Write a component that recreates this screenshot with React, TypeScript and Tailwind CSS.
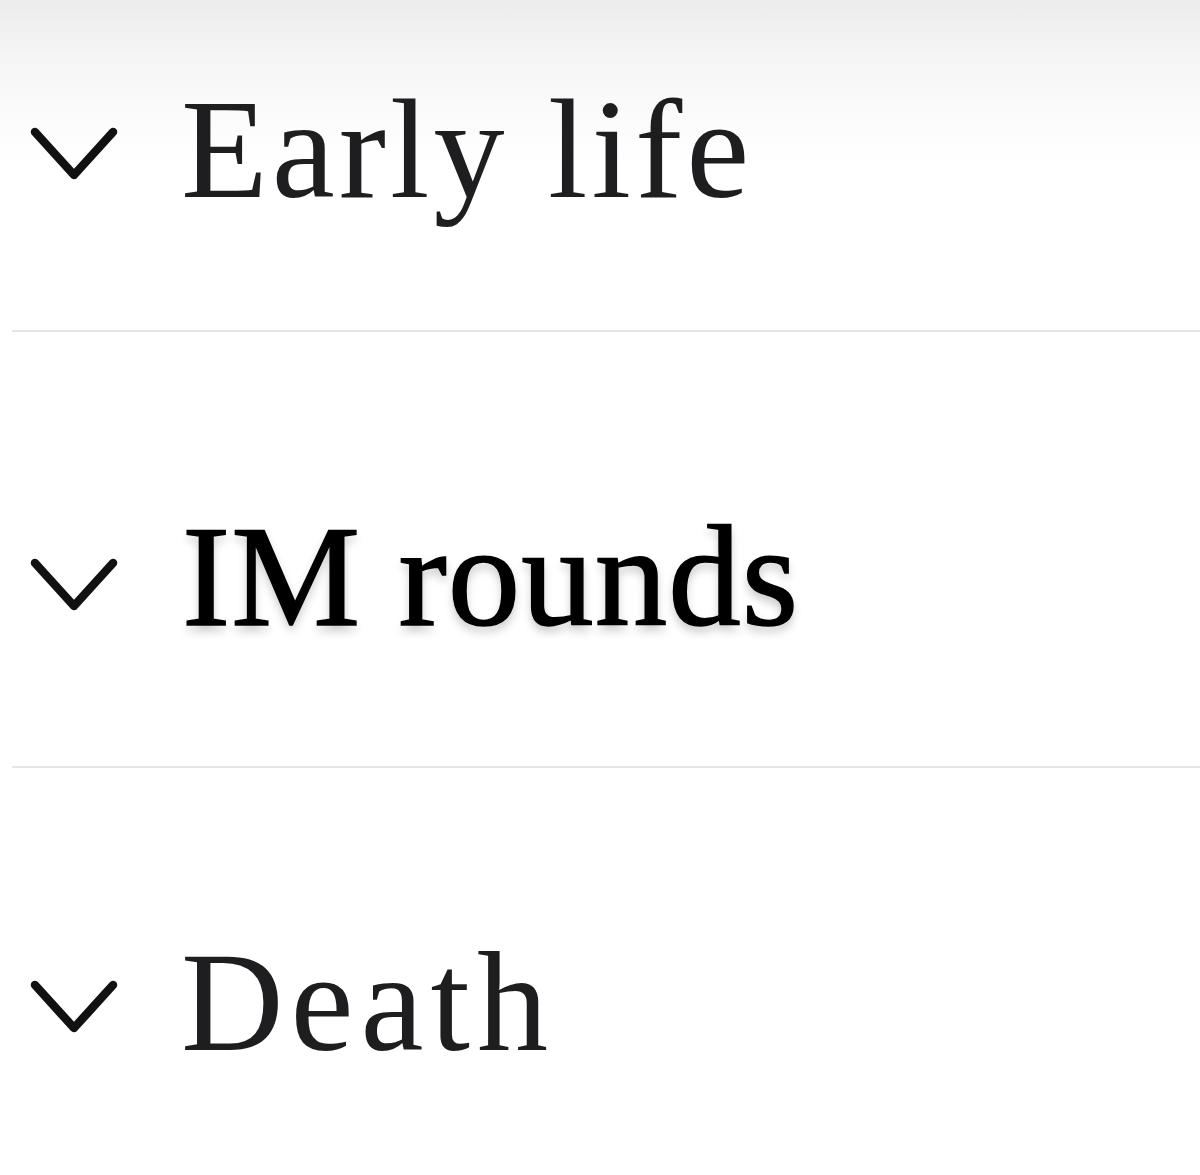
import React from 'react';

const serif = { fontFamily: '"Liberation Serif", "Times New Roman", serif' };

const Chevron: React.FC = () => (
  <svg width={92} height={64} viewBox="0 0 92 64" className="shrink-0">
    <path d="M7 14 L46 57 L85 14" fill="none" stroke="#111" strokeWidth={8.5} strokeLinecap="round" strokeLinejoin="round" />
  </svg>
);

const Section: React.FC<{ title: string; strong?: boolean; chevronOffset?: string; tracking?: string }> = ({
  title,
  strong,
  chevronOffset = 'mt-[4px]',
  tracking = 'tracking-[4px]',
}) => (
  <div className="flex items-center">
    <div className={`ml-[28px] ${chevronOffset}`}>
      <Chevron />
    </div>
    {strong ? (
      <h2
        style={serif}
        className="ml-[62px] text-[145px] leading-none tracking-[1px] text-black [-webkit-text-stroke:1.5px_black] [text-shadow:0_6px_10px_rgba(0,0,0,0.22)]"
      >
        {title}
      </h2>
    ) : (
      <h2 style={serif} className={`ml-[61px] text-[142px] leading-none ${tracking} text-[#1e1e20]`}>
        {title}
      </h2>
    )}
  </div>
);

export default function App() {
  return (
    <div className="w-[1200px] h-[1175px] overflow-hidden bg-[linear-gradient(to_bottom,#ececec_0%,#f7f7f7_6%,#ffffff_14%)]">
      <div className="pt-[78px]">
        <Section title="Early life" chevronOffset="mt-[2px]" />
      </div>
      <div className="mt-[110px] ml-[12px] h-[2px] bg-[#e4e4e6]" />
      <div className="mt-[172px]">
        <Section title="IM rounds" strong chevronOffset="mt-[8px]" />
      </div>
      <div className="mt-[117px] ml-[12px] h-[2px] bg-[#e6e6e8]" />
      <div className="mt-[163px]">
        <Section title="Death" chevronOffset="mt-[2px]" tracking="tracking-[7px]" />
      </div>
    </div>
  );
}
